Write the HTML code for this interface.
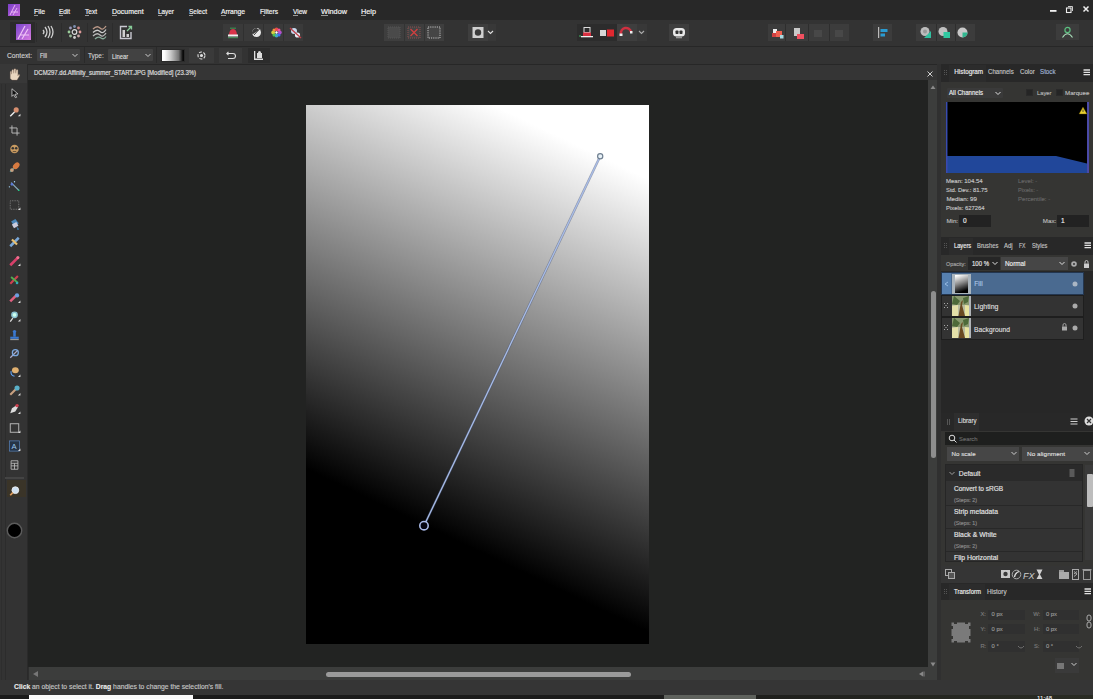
<!DOCTYPE html>
<html><head><meta charset="utf-8">
<style>
*{box-sizing:border-box}
html,body{margin:0;padding:0;width:1093px;height:699px;overflow:hidden;background:#2d2d2d;font-family:"Liberation Sans",sans-serif;color:#d8d8d8}
.a{position:absolute}
.t{position:absolute;white-space:nowrap;line-height:1;transform-origin:0 0}
#menubar{left:0;top:0;width:1093px;height:20px;background:#282828}
.m{position:absolute;top:6px;font-size:8.5px;color:#e6e6e6;letter-spacing:-0.2px}
#toolbar{left:0;top:20px;width:1093px;height:26px;background:#333333}
#ctxbar{left:0;top:46px;width:1093px;height:18px;background:#333333;border-top:1px solid #272727}
#tools{left:0;top:64px;width:28px;height:616px;background:#333333}
#doctab{left:28px;top:64px;width:909px;height:16px;background:#353535;border-top:1px solid #272727}
#canvas{left:28px;top:80px;width:900px;height:587px;background:#222322}
#vscroll{left:928px;top:80px;width:9px;height:600px;background:#3c3d3c}
#hscroll{left:29px;top:667px;width:899px;height:13px;background:#3c3d3c}
#status{left:0;top:680px;width:1093px;height:15px;background:#353535}
#bottom{left:0;top:695px;width:1093px;height:4px;background:linear-gradient(90deg,#1b1b1b 0%,#1c1c1b 60%,#2a2c24 100%)}
#panels{left:937px;top:64px;width:156px;height:616px;background:#303030}
.btn{position:absolute;background:#333}
.dd{position:absolute;background:#3a3a3a;border-radius:1px}
</style></head><body>
<div id="menubar" class="a"></div>
<div id="toolbar" class="a"></div>
<div id="ctxbar" class="a"></div>
<div id="tools" class="a"></div>
<div id="doctab" class="a"></div>
<div id="canvas" class="a"></div>
<div id="vscroll" class="a"></div>
<div id="hscroll" class="a"></div>
<div id="status" class="a"></div>
<div id="bottom" class="a"></div>
<div id="panels" class="a"></div>

<!-- MENUBAR -->
<svg class="a" style="left:8px;top:4px" width="12" height="12" viewBox="0 0 12 12">
<defs><linearGradient id="pg1" x1="0" y1="0" x2="1" y2="1"><stop offset="0" stop-color="#7b3fc8"/><stop offset="1" stop-color="#c267d8"/></linearGradient></defs>
<rect width="12" height="12" fill="url(#pg1)"/>
<path d="M2 11 L7 1 M5 11 L9 4 M3 8 L10 8" stroke="#e9b6f2" stroke-width="1" fill="none"/>
</svg>
<svg class="a" style="left:1048px;top:4px" width="45" height="12">
<rect x="2" y="6" width="6.5" height="1.8" fill="#f0f0f0"/>
<rect x="18.5" y="4" width="4.5" height="4.5" fill="none" stroke="#eee" stroke-width="1.1"/>
<path d="M20 2.5 H24.5 V7" fill="none" stroke="#ccc" stroke-width="1"/>
<path d="M35.5 2.5 L40.5 7.5 M40.5 2.5 L35.5 7.5" stroke="#eee" stroke-width="1.5"/>
</svg>

<div class="a" style="left:34px;top:15px;width:4px;height:1px;background:#9a9a9a"></div><div class="a" style="left:59px;top:15px;width:4px;height:1px;background:#9a9a9a"></div><div class="a" style="left:85px;top:15px;width:4px;height:1px;background:#9a9a9a"></div><div class="a" style="left:112px;top:15px;width:5px;height:1px;background:#9a9a9a"></div><div class="a" style="left:158px;top:15px;width:4px;height:1px;background:#9a9a9a"></div><div class="a" style="left:189px;top:15px;width:4px;height:1px;background:#9a9a9a"></div><div class="a" style="left:221px;top:15px;width:5px;height:1px;background:#9a9a9a"></div><div class="a" style="left:263px;top:15px;width:2px;height:1px;background:#9a9a9a"></div><div class="a" style="left:293px;top:15px;width:5px;height:1px;background:#9a9a9a"></div><div class="a" style="left:321px;top:15px;width:7px;height:1px;background:#9a9a9a"></div><div class="a" style="left:361px;top:15px;width:5px;height:1px;background:#9a9a9a"></div>
<!-- TOOLBAR -->
<div class="a" style="left:10px;top:22px;width:25px;height:21px;background:#2a2a2a"></div>
<div class="a" style="left:36px;top:23px;width:1px;height:19px;background:#2c2c2c"></div>
<div class="a" style="left:61px;top:23px;width:1px;height:19px;background:#2c2c2c"></div>
<div class="a" style="left:87px;top:23px;width:1px;height:19px;background:#2c2c2c"></div>
<div class="a" style="left:112px;top:23px;width:1px;height:19px;background:#2c2c2c"></div>
<svg class="a" style="left:16px;top:24px" width="15" height="16" viewBox="0 0 15 16">
<defs><linearGradient id="pg2" x1="0" y1="0" x2="1" y2="1"><stop offset="0" stop-color="#7a45cc"/><stop offset="1" stop-color="#d77be0"/></linearGradient></defs>
<rect width="15" height="16" fill="url(#pg2)"/>
<path d="M2 15 L9 2 M6 15 L12 5 M4 11 L13 11" stroke="#f0c4f6" stroke-width="1.2" fill="none"/>
</svg>
<svg class="a" style="left:41px;top:24px" width="15" height="16" viewBox="0 0 15 16" fill="none" stroke="#cfcfcf" stroke-width="1.3">
<path d="M2 6 Q4 8 2 10"/><path d="M4 3 Q8 8 4 13"/><path d="M7 2 Q11 8 7 14"/><path d="M10 2 Q14 8 10 14"/>
</svg>
<svg class="a" style="left:67px;top:24px" width="15" height="16" viewBox="0 0 15 16">
<circle cx="7.5" cy="8" r="2.3" fill="none" stroke="#ddd" stroke-width="1.2"/>
<circle cx="7.5" cy="2.5" r="1.4" fill="#7e8fb0"/><circle cx="11.5" cy="4" r="1.4" fill="#c88"/><circle cx="13" cy="8" r="1.4" fill="#d99"/>
<circle cx="11.5" cy="12" r="1.4" fill="#caa"/><circle cx="7.5" cy="13.5" r="1.4" fill="#ccc"/><circle cx="3.5" cy="12" r="1.4" fill="#9b9"/>
<circle cx="2" cy="8" r="1.4" fill="#9c9"/><circle cx="3.5" cy="4" r="1.4" fill="#99b"/>
</svg>
<svg class="a" style="left:92px;top:24px" width="15" height="16" viewBox="0 0 15 16" fill="none" stroke-width="1.3">
<path d="M1 5 Q5 1 8 4 T14 2" stroke="#b98"/><path d="M1 8.5 Q5 4.5 8 7.5 T14 5.5" stroke="#ccc"/><path d="M1 12 Q5 8 8 11 T14 9" stroke="#bbb"/><path d="M3 15 Q6 12 9 14 T14 12.5" stroke="#8a9"/>
</svg>
<svg class="a" style="left:118px;top:24px" width="15" height="16" viewBox="0 0 15 16">
<path d="M9 2.5 H2.5 V14.5 H13 V8" fill="none" stroke="#c8c8d0" stroke-width="1.4"/>
<rect x="4.5" y="6" width="2.5" height="7" fill="#d0d0d0"/><rect x="8.5" y="10" width="2.5" height="3" fill="#d0d0d0"/>
<path d="M9 7 L13.5 2.5 M10.5 2.5 H13.5 V5.5" fill="none" stroke="#8c9" stroke-width="1.3"/>
</svg>

<!-- group A -->
<div class="btn" style="left:223px;top:24px;width:80px;height:17px;background:#3a3a3a"></div>
<div class="a" style="left:243px;top:24px;width:1px;height:17px;background:#303030"></div>
<div class="a" style="left:263px;top:24px;width:1px;height:17px;background:#303030"></div>
<div class="a" style="left:283px;top:24px;width:1px;height:17px;background:#303030"></div>
<svg class="a" style="left:223px;top:24px" width="80" height="17">
<path d="M6 12 Q6 5 10 5 Q14 5 14 12 Z" fill="#d9344a"/><rect x="5" y="10.5" width="10" height="2" fill="#f0f0f0"/><rect x="5" y="13" width="10" height="1.2" fill="#4a8a5a"/><rect x="7" y="3.5" width="6" height="1.5" fill="#3a7a4a"/>
<circle cx="33.5" cy="8.5" r="4.5" fill="#e8e8e8"/><path d="M33.5 4 A4.5 4.5 0 0 0 29.5 10.5 L36 6 Z" fill="#3a3a3a"/><path d="M31 11 L36.5 5" stroke="#444" stroke-width="1"/>
<circle cx="53.5" cy="5.5" r="1.9" fill="#e84a4a"/><circle cx="56.8" cy="8.5" r="1.9" fill="#b050d0"/><circle cx="53.5" cy="11.5" r="1.9" fill="#40a8c8"/><circle cx="50.2" cy="8.5" r="1.9" fill="#d8d040"/><circle cx="51" cy="6" r="1.5" fill="#f09040"/><circle cx="51" cy="11" r="1.5" fill="#50c050"/><circle cx="56" cy="11" r="1.5" fill="#4070f0"/><circle cx="56" cy="6" r="1.5" fill="#f050a0"/><circle cx="53.5" cy="8.5" r="1.2" fill="#fff"/>
<circle cx="71" cy="7" r="3" fill="#c8daf0"/><circle cx="74.5" cy="11" r="2.6" fill="#e8eef8"/><path d="M67 4 L78 14" stroke="#c04048" stroke-width="1.3"/>
</svg>

<!-- group B -->
<div class="btn" style="left:384px;top:24px;width:60px;height:17px;background:#3e3e3e"></div>
<div class="a" style="left:404px;top:24px;width:1px;height:17px;background:#333"></div>
<div class="a" style="left:424px;top:24px;width:1px;height:17px;background:#333"></div>
<svg class="a" style="left:384px;top:24px" width="60" height="17">
<rect x="4" y="3" width="12" height="11" fill="#4a4a4a" stroke="#555" stroke-width="1" stroke-dasharray="1 1"/>
<rect x="24" y="3" width="12" height="11" fill="#444" stroke="#8a5050" stroke-width="1" stroke-dasharray="1 1"/><path d="M26.5 5 L33.5 12 M33.5 5 L26.5 12" stroke="#d04040" stroke-width="1.3"/>
<rect x="44" y="3" width="12" height="11" fill="#454545" stroke="#c0c0c0" stroke-width="1" stroke-dasharray="1.2 1"/>
</svg>
<div class="btn" style="left:468px;top:24px;width:20px;height:17px;background:#3e3e3e"></div>
<div class="btn" style="left:488px;top:24px;width:8px;height:17px;background:#383838"></div>
<svg class="a" style="left:468px;top:24px" width="28" height="17">
<rect x="4.5" y="3" width="11" height="11" fill="#d0d0d0"/><circle cx="10" cy="8.5" r="3.2" fill="#3a3a3a"/>
<path d="M20 7 L22.5 9.5 L25 7" fill="none" stroke="#ddd" stroke-width="1.1"/>
</svg>

<!-- group D snapping -->
<div class="btn" style="left:577px;top:24px;width:40px;height:17px;background:#2c2c2c"></div>
<div class="btn" style="left:617px;top:24px;width:20px;height:17px;background:#3e3e3e"></div>
<div class="btn" style="left:637px;top:24px;width:10px;height:17px;background:#383838"></div>
<svg class="a" style="left:577px;top:24px" width="70" height="17">
<rect x="7" y="3.5" width="6" height="5" fill="none" stroke="#ddd" stroke-width="1"/><rect x="6" y="8.5" width="8" height="3.5" fill="#d83040"/><rect x="4" y="12" width="12" height="1.3" fill="#f0f0f0"/><circle cx="3" cy="12" r="1" fill="#3a8a50"/>
<rect x="23" y="6" width="6" height="6" fill="#d8d8d8"/><rect x="30" y="5.5" width="7" height="7" fill="#e02830"/>
<path d="M44 10 A5 5 0 1 1 54 8" fill="none" stroke="#d03040" stroke-width="2.5"/><rect x="42.5" y="9.5" width="3" height="2.5" fill="#eee"/><rect x="53" y="7" width="2.5" height="2.5" fill="#eee"/>
<path d="M62 7 L64.5 9.5 L67 7" fill="none" stroke="#aaa" stroke-width="1.1"/>
</svg>
<div class="btn" style="left:669px;top:24px;width:20px;height:17px;background:#3e3e3e"></div>
<svg class="a" style="left:669px;top:24px" width="20" height="17">
<rect x="4" y="4" width="12" height="8.5" rx="3.5" fill="#e8e8e8"/><rect x="6.5" y="6.5" width="3" height="3.5" rx="0.8" fill="#333"/><rect x="10.5" y="6.5" width="3" height="3.5" rx="0.8" fill="#333"/><rect x="7" y="12.5" width="6" height="1.8" fill="#999"/>
</svg>

<!-- group E -->
<div class="btn" style="left:768px;top:24px;width:81px;height:17px;background:#3c3c3c"></div>
<div class="a" style="left:785px;top:24px;width:1px;height:17px;background:#2e2e2e"></div>
<div class="a" style="left:808px;top:24px;width:1px;height:17px;background:#2e2e2e"></div>
<div class="a" style="left:829px;top:24px;width:1px;height:17px;background:#2e2e2e"></div>
<svg class="a" style="left:768px;top:24px" width="81" height="17">
<rect x="5" y="5" width="4" height="4" fill="#eee"/><rect x="8" y="7" width="6" height="6" fill="#f06050"/><rect x="4" y="9" width="4" height="4" fill="#d04040"/><rect x="12" y="11" width="3.5" height="3.5" fill="#a8d8e0"/>
<rect x="26" y="4" width="6" height="8" fill="#c8c8c8"/><rect x="29" y="10" width="7" height="5" fill="#f05060"/>
<rect x="46" y="6" width="8" height="7" fill="#484848"/><rect x="67" y="6" width="8" height="7" fill="#484848"/>
</svg>
<div class="btn" style="left:873px;top:24px;width:19px;height:17px;background:#3c3c3c"></div>
<svg class="a" style="left:873px;top:24px" width="19" height="17">
<rect x="5" y="3" width="1.2" height="11" fill="#bbb"/><rect x="7.5" y="5" width="7" height="3" fill="#2a9ad0"/><rect x="7.5" y="9.5" width="4.5" height="3" fill="#2a9ad0"/>
</svg>
<div class="btn" style="left:916px;top:24px;width:59px;height:17px;background:#3c3c3c"></div>
<div class="a" style="left:936px;top:24px;width:1px;height:17px;background:#2e2e2e"></div>
<div class="a" style="left:955px;top:24px;width:1px;height:17px;background:#2e2e2e"></div>
<svg class="a" style="left:916px;top:24px" width="59" height="17">
<circle cx="9" cy="7.5" r="4.5" fill="#bdbdbd"/><circle cx="9" cy="7.5" r="2" fill="#999"/><path d="M8 14 L15 14 L15 7 Z" fill="#30c0a0"/>
<circle cx="27" cy="7.5" r="4.5" fill="#c0c0c0"/><rect x="27.5" y="8" width="6.5" height="6" fill="#30c8a0"/>
<circle cx="46.5" cy="8.5" r="5" fill="#c8c8c8"/><path d="M46.5 8.5 L51.5 8.5 A5 5 0 0 1 46.5 13.5 Z" fill="#30b890"/>
</svg>
<div class="btn" style="left:1056px;top:24px;width:23px;height:16px;background:#3c3c3c"></div>
<svg class="a" style="left:1056px;top:24px" width="23" height="16" fill="none" stroke="#8ad0a0" stroke-width="1.2">
<circle cx="11.5" cy="6" r="2.6" stroke="#5cc080"/><path d="M6.5 13.5 Q11.5 6 16.5 13.5" stroke="#a8dcb8"/>
</svg>

<!-- CONTEXT BAR -->
<div class="dd" style="left:37px;top:49px;width:43px;height:12px;background:#424242"></div><div class="a" style="left:84px;top:47px;width:1px;height:16px;background:#2a2a2a"></div>
<svg class="a" style="left:72px;top:53px" width="6" height="5"><path d="M0.5 1 L3 3.5 L5.5 1" fill="none" stroke="#ccc" stroke-width="1"/></svg>
<div class="dd" style="left:108px;top:49px;width:45px;height:12px;background:#424242"></div><div class="a" style="left:156px;top:47px;width:1px;height:16px;background:#2a2a2a"></div>
<svg class="a" style="left:145px;top:53px" width="6" height="5"><path d="M0.5 1 L3 3.5 L5.5 1" fill="none" stroke="#ccc" stroke-width="1"/></svg>
<div class="a" style="left:161px;top:49px;width:24px;height:13px;background:linear-gradient(90deg,#fff 10%,#c8c8c8 40%,#777 75%,#0a0a0a 95%);border:1px solid #2a2a2a"></div>
<div class="btn" style="left:189px;top:48px;width:25px;height:15px;background:#3a3a3a"></div>
<svg class="a" style="left:196px;top:50px" width="11" height="11" fill="none" stroke="#ddd" stroke-width="1.1"><circle cx="5.5" cy="5.5" r="3.5" stroke-dasharray="3 1.5"/><circle cx="5.5" cy="5.5" r="1" fill="#ddd"/></svg>
<div class="btn" style="left:219px;top:48px;width:23px;height:15px;background:#3a3a3a"></div>
<svg class="a" style="left:225px;top:50px" width="11" height="11" fill="none" stroke="#ddd" stroke-width="1.1"><path d="M2 3.5 H8 A2.5 2.5 0 0 1 8 8.5 H3"/><path d="M3.5 1.8 L1.8 3.5 L3.5 5.2"/></svg>
<div class="btn" style="left:248px;top:48px;width:22px;height:15px;background:#2c2c2c"></div>
<svg class="a" style="left:253px;top:50px" width="11" height="11"><rect x="1" y="1" width="1.3" height="9" fill="#ddd"/><rect x="4" y="3" width="5" height="5" fill="#ddd"/><rect x="1" y="8.5" width="9" height="1.5" fill="#ddd"/><circle cx="6.5" cy="2.5" r="1.5" fill="#ddd"/></svg>

<!-- DOC TAB -->
<svg class="a" style="left:926px;top:70px" width="8" height="8"><path d="M1.5 1.5 L6.5 6.5 M6.5 1.5 L1.5 6.5" stroke="#d0d0d0" stroke-width="1"/></svg>
<svg class="a" style="left:929px;top:84px" width="8" height="7"><path d="M4 1.5 L6.5 5 L1.5 5 Z" fill="#8a8a8a"/></svg>
<svg class="a" style="left:929px;top:661px" width="8" height="7"><path d="M4 5.5 L6.5 1.5 L1.5 1.5 Z" fill="#8a8a8a"/></svg>
<svg class="a" style="left:32px;top:670px" width="7" height="8"><path d="M1 4 L6 1 L6 7 Z" fill="#777"/></svg>
<svg class="a" style="left:918px;top:670px" width="7" height="8"><path d="M1 4 L5 1.5 L5 6.5 Z" fill="#888"/><rect x="5.5" y="1.5" width="1" height="5" fill="#888"/></svg>
<div class="a" style="left:326px;top:672px;width:305px;height:5px;border-radius:3px;background:#9a9a9a"></div>

<!-- STATUS -->
<div class="a" style="left:29px;top:695px;width:164px;height:4px;background:#fafafa"></div>
<div class="a" style="left:664px;top:695px;width:92px;height:4px;background:#5f625d"></div><div class="t" style="left:1037px;top:695px;font-size:6px;color:#ddd;font-weight:bold">11:48</div>
<!-- LEFT TOOLS -->
<div class="a" style="left:0;top:64px;width:28px;height:19px;background:#383838"></div>
<div class="a" style="left:5px;top:84px;width:1px;height:596px;background:#2c2c2c"></div><div class="a" style="left:1px;top:84px;width:1px;height:596px;background:#2e2e2e"></div><div class="a" style="left:7px;top:480px;width:19px;height:17px;background:#3a3428"></div><div class="a" style="left:27px;top:64px;width:1px;height:616px;background:#2a2a2a"></div>
<svg class="a" style="left:0;top:64px" width="28" height="614">
<g transform="translate(14.5,11) scale(0.85)"><path d="M-5 4 L-5 -3 Q-5 -5 -3.5 -4 L-3.5 -1 L-3 -6 Q-2 -7 -1 -6 L-1 -2 L-0.5 -7 Q0.5 -8 1.5 -7 L1.5 -2 L2 -6 Q3 -7 4 -6 L4 1 L5 -1 Q6.5 -1 6 1 L3 6 L-3 6 Z" fill="#ead6bf" stroke="#8a7060" stroke-width="0.4"/></g>
<g transform="translate(14.5,29) scale(0.85)"><path d="M-3 -5 L4 1 L0.5 1.5 L2.5 5 L1 5.5 L-1 2 L-3 4 Z" fill="#111" stroke="#ddd" stroke-width="0.9"/></g>
<g transform="translate(14.5,48) scale(0.85)"><circle cx="2" cy="-2.5" r="3" fill="#d89070"/><path d="M0 0 L-5 5" stroke="#eee" stroke-width="1.6"/><path d="M4 5 L7 5 L7 2 Z" fill="#ddd"/></g>
<g transform="translate(14.5,66.5) scale(0.85)" fill="none" stroke="#bbb" stroke-width="1.1"><path d="M-3 -6 V3 H6 M-6 -3 H3 V6"/></g>
<g transform="translate(14.5,85) scale(0.85)"><circle r="5" fill="#c89a60"/><circle cx="-2" cy="-1" r="1.5" fill="#333"/><circle cx="2" cy="-1" r="1.5" fill="#333"/><path d="M-2 3 L2 3" stroke="#543" stroke-width="1"/></g>
<g transform="translate(14.5,103.5) scale(0.85)"><path d="M-5 5 L0 0" stroke="#3a9aa0" stroke-width="2"/><ellipse cx="2" cy="-2" rx="3.2" ry="4.5" transform="rotate(45 2 -2)" fill="#d77a40"/><circle cx="-3" cy="3" r="2.2" fill="#c8a080"/></g>
<g transform="translate(14.5,122) scale(0.85)"><path d="M-4 -4 L5 5" stroke="#8ab" stroke-width="1.3"/><path d="M-5 -2 L-3 -4 L-1 -2 L-3 0 Z" fill="#5a7ad8"/><circle cx="0" cy="-5" r="0.8" fill="#adf"/><circle cx="-6" cy="1" r="0.8" fill="#adf"/><circle cx="5" cy="5" r="1" fill="#2c8"/></g>
<g transform="translate(14.5,141) scale(0.85)"><rect x="-5" y="-5" width="10" height="10" fill="none" stroke="#888" stroke-width="1" stroke-dasharray="1 1"/><path d="M4 6 L7 6 L7 3 Z" fill="#ddd"/></g>
<g transform="translate(14.5,160) scale(0.85)"><path d="M-4 -3 L1 -6 L5 -1 L0 3 Z" fill="#4a86b8"/><rect x="-3" y="-1" width="6" height="5" fill="#ccd" transform="rotate(-30)"/><path d="M3 4 Q5 6 4 7" stroke="#4af" fill="none"/></g>
<g transform="translate(14.5,178) scale(0.85)"><path d="M-5 5 L5 -5" stroke="#7aa8d8" stroke-width="3"/><path d="M-3 -3 L3 3" stroke="#e8c070" stroke-width="2.5"/></g>
<g transform="translate(14.5,197) scale(0.85)"><path d="M-5 5 L4 -4" stroke="#d8406a" stroke-width="3.2"/><circle cx="4" cy="-4" r="1.8" fill="#f07090"/><path d="M4 6 L7 6 L7 3 Z" fill="#ddd"/></g>
<g transform="translate(14.5,215.5) scale(0.85)"><path d="M-5 5 L4 -4" stroke="#d04050" stroke-width="2.5"/><path d="M-4 -3 L4 4" stroke="#50b050" stroke-width="2.2"/><circle cx="3" cy="4" r="1.5" fill="#3ab"/></g>
<g transform="translate(14.5,234) scale(0.85)"><path d="M-5 4 L3 -4" stroke="#e06080" stroke-width="3"/><circle cx="3" cy="-3" r="2.5" fill="#6a9ee0"/><path d="M4 6 L7 6 L7 3 Z" fill="#ddd"/></g>
<g transform="translate(14.5,252.5) scale(0.85)"><circle cx="0" cy="-2" r="4" fill="#8ac0d0"/><circle cx="0" cy="-2" r="2.2" fill="#cfe"/><path d="M-2 2 L-5 6" stroke="#ddd" stroke-width="1.5"/><path d="M4 6 L7 6 L7 3 Z" fill="#ddd"/></g>
<g transform="translate(14.5,271) scale(0.85)"><circle cx="0" cy="-4" r="2" fill="#3a78d0"/><rect x="-1.5" y="-3" width="3" height="5" fill="#3a78d0"/><rect x="-5" y="2" width="10" height="2.5" fill="#3a78d0"/><rect x="-5" y="5" width="10" height="1" fill="#bbb"/></g>
<g transform="translate(14.5,289.5) scale(0.85)"><path d="M-5 5 L4 -4" stroke="#aac" stroke-width="1.5"/><circle cx="1" cy="-1" r="3.5" fill="none" stroke="#7aa8e0" stroke-width="1.5"/></g>
<g transform="translate(14.5,308) scale(0.85)"><ellipse cx="1" cy="-2" rx="4" ry="3.5" fill="#e0b070"/><path d="M-4 -1 Q-5 4 0 5" stroke="#6af" fill="none" stroke-width="1.2"/><path d="M4 6 L7 6 L7 3 Z" fill="#ddd"/></g>
<g transform="translate(14.5,326.5) scale(0.85)"><path d="M-5 5 L3 -3" stroke="#c8a080" stroke-width="2.5"/><circle cx="3" cy="-3" r="3" fill="#5ab0c8"/><path d="M4 6 L7 6 L7 3 Z" fill="#ddd"/></g>
<g transform="translate(14.5,345) scale(0.85)"><path d="M-5 5 L-3 -1 L2 -4 L4 -2 L1 3 Z" fill="#ddd"/><circle cx="3" cy="-4" r="2" fill="#d04050"/><path d="M4 6 L7 6 L7 3 Z" fill="#ddd"/></g>
<g transform="translate(14.5,364) scale(0.85)"><rect x="-5" y="-5" width="10" height="10" fill="none" stroke="#bbb" stroke-width="1.1"/><path d="M4 6 L7 6 L7 3 Z" fill="#ddd"/></g>
<g transform="translate(14.5,382) scale(0.85)"><rect x="-6" y="-6" width="12" height="12" fill="#263446" stroke="#5a86c0" stroke-width="0.8"/><text x="-3.5" y="4" font-size="9" fill="#9cc8f0" font-family="Liberation Sans">A</text><path d="M4 6 L7 6 L7 3 Z" fill="#ddd"/></g>
<g transform="translate(14.5,401) scale(0.85)" fill="none" stroke="#bbb" stroke-width="1"><path d="M-4 -5 H4 V5 H-4 Z M-4 -2 H4 M-4 1 H4 M0 -2 V5"/></g>
<rect x="5" y="413" width="19" height="2" fill="#444"/>
<g transform="translate(14.5,427) scale(0.85)"><circle cx="1" cy="-1" r="4" fill="#cfe0f0" stroke="#eee" stroke-width="1"/><path d="M-2 2 L-5 5" stroke="#e0a060" stroke-width="2"/></g>
<circle cx="14.5" cy="466.5" r="7.2" fill="#000" stroke="#5c5c5c" stroke-width="1.4"/>
</svg>
<!-- RIGHT PANELS -->
<div class="a" style="left:937px;top:64px;width:156px;height:616px;background:#303030"></div>
<!-- histogram -->
<div class="a" style="left:941px;top:64px;width:152px;height:18px;background:#282828"></div>
<div class="a" style="left:949px;top:65px;width:37px;height:17px;background:#2c2c2c"></div>
<div class="a" style="left:941px;top:82px;width:152px;height:155px;background:#353533"></div>
<svg class="a" style="left:943px;top:69px" width="5" height="8"><path d="M1 1h1v1h-1zM3 1h1v1h-1zM1 3h1v1h-1zM3 3h1v1h-1zM1 5h1v1h-1zM3 5h1v1h-1z" fill="#555"/></svg>
<svg class="a" style="left:1083px;top:69px" width="8" height="8"><path d="M0.5 1h6.5M0.5 3.3h6.5M0.5 5.6h6.5" stroke="#e0e0e0" stroke-width="1.3"/></svg>

<div class="dd" style="left:947px;top:88px;width:56px;height:10px;background:#3a3a3a"></div>
<svg class="a" style="left:995px;top:91px" width="6" height="5"><path d="M0.5 1 L3 3.5 L5.5 1" fill="none" stroke="#ddd" stroke-width="1"/></svg>
<div class="a" style="left:1026px;top:89px;width:7px;height:7px;background:#252525;border:1px solid #2a2a2a"></div>
<div class="a" style="left:1056px;top:89px;width:7px;height:7px;background:#252525;border:1px solid #2a2a2a"></div>

<svg class="a" style="left:946px;top:102px" width="143" height="71">
<rect width="143" height="71" fill="#21479a"/><rect x="141" width="2" height="71" fill="#4a4aa8"/><rect width="1.5" height="71" fill="#3a4ab0"/>
<path d="M1.5 0 H141 V61.5 L110 54 L1.5 54 Z" fill="#000"/>
<path d="M137 5 L141 12 L133 12 Z" fill="#e8d030" stroke="#5a4a00" stroke-width="0.4"/><rect x="136.6" y="7.5" width="0.8" height="2.5" fill="#333"/>
</svg>
<div class="a" style="left:959px;top:215px;width:32px;height:12px;background:#222"></div>
<div class="a" style="left:1057px;top:215px;width:32px;height:12px;background:#222"></div>

<!-- layers -->
<div class="a" style="left:941px;top:237px;width:152px;height:18px;background:#282828"></div>
<div class="a" style="left:949px;top:238px;width:24px;height:17px;background:#2c2c2c"></div>
<div class="a" style="left:941px;top:255px;width:152px;height:158px;background:#353533"></div>
<svg class="a" style="left:943px;top:242px" width="5" height="8"><path d="M1 1h1v1h-1zM3 1h1v1h-1zM1 3h1v1h-1zM3 3h1v1h-1zM1 5h1v1h-1zM3 5h1v1h-1z" fill="#555"/></svg>
<svg class="a" style="left:1084px;top:242px" width="8" height="8"><path d="M0.5 1h6.5M0.5 3.3h6.5M0.5 5.6h6.5" stroke="#e0e0e0" stroke-width="1.3"/></svg>

<div class="a" style="left:968px;top:257px;width:32px;height:13px;background:#262626"></div>
<svg class="a" style="left:992px;top:261px" width="6" height="5"><path d="M0.5 1 L3 3.5 L5.5 1" fill="none" stroke="#ddd" stroke-width="1"/></svg>
<div class="a" style="left:1001px;top:257px;width:67px;height:13px;background:#464646"></div>
<svg class="a" style="left:1059px;top:261px" width="6" height="5"><path d="M0.5 1 L3 3.5 L5.5 1" fill="none" stroke="#ddd" stroke-width="1"/></svg>
<svg class="a" style="left:1070px;top:259px" width="22" height="10"><circle cx="4" cy="5" r="2.8" fill="#aaa"/><circle cx="4" cy="5" r="1" fill="#333"/><rect x="14" y="4.5" width="5" height="4.5" fill="#ccc"/><path d="M15 4.5 V3 A1.5 1.5 0 0 1 18 3 V4.5" fill="none" stroke="#ccc" stroke-width="0.9"/></svg>

<div class="a" style="left:941px;top:271px;width:152px;height:142px;background:#272727"></div>
<div class="a" style="left:941px;top:272px;width:143px;height:23px;background:#4a6a90;border:1px solid #233650"></div>
<div class="a" style="left:942px;top:273px;width:9px;height:21px;background:#5680b0"></div>
<div class="a" style="left:941px;top:295px;width:143px;height:22px;background:#333333;border:1px solid #1e1e1e"></div>
<div class="a" style="left:941px;top:317px;width:143px;height:23px;background:#333333;border:1px solid #1e1e1e"></div>
<div class="a" style="left:952px;top:274px;width:19px;height:20px;background:#aab4bc"></div>
<div class="a" style="left:955px;top:275px;width:13px;height:18px;background:linear-gradient(160deg,#fff 5%,#888 45%,#000 85%)"></div>
<svg class="a" style="left:952px;top:296px" width="19" height="20"><rect width="19" height="20" fill="#b8bca0"/><rect x="0" y="0" width="19" height="9" fill="#8a9a70"/><path d="M2 0 L8 5 L5 9 L0 8 Z M11 2 L17 0 L16 6 L12 8 Z" fill="#4e6a3a"/><path d="M0 10 L6 9 L6 20 L0 20 Z" fill="#e4e0a8"/><path d="M13 9 L19 10 L19 20 L13 20 Z" fill="#e8e4a0"/><path d="M6.5 20 L9 6 L11 4 L10 9 L13 20 Z" fill="#6a4a22"/><rect x="17" y="0" width="2" height="20" fill="#b0b4b8"/></svg>
<svg class="a" style="left:952px;top:318px" width="19" height="20"><rect width="19" height="20" fill="#b8bca0"/><rect x="0" y="0" width="19" height="9" fill="#8a9a70"/><path d="M2 0 L8 5 L5 9 L0 8 Z M11 2 L17 0 L16 6 L12 8 Z" fill="#4e6a3a"/><path d="M0 10 L6 9 L6 20 L0 20 Z" fill="#e4e0a8"/><path d="M13 9 L19 10 L19 20 L13 20 Z" fill="#e8e4a0"/><path d="M6.5 20 L9 6 L11 4 L10 9 L13 20 Z" fill="#6a4a22"/><rect x="17" y="0" width="2" height="20" fill="#b0b4b8"/></svg>
<svg class="a" style="left:943px;top:280px" width="7" height="50"><path d="M5 2 L2 4 L5 6" fill="none" stroke="#9cc0e8" stroke-width="0.9"/>
<path d="M1 23h1v1h-1zM4 23h1v1h-1zM2.5 25h1v1h-1zM1 27h1v1h-1zM4 27h1v1h-1z" fill="#aaa"/>
<path d="M1 45h1v1h-1zM4 45h1v1h-1zM2.5 47h1v1h-1zM1 49h1v1h-1zM4 49h1v1h-1z" fill="#aaa"/></svg>
<svg class="a" style="left:1060px;top:278px" width="20" height="56"><circle cx="15" cy="6" r="2.5" fill="#aab6c4"/><circle cx="15" cy="28" r="2.5" fill="#aaa"/><circle cx="15" cy="50" r="2.5" fill="#aaa"/><rect x="2" y="48.5" width="5" height="4" fill="#aaa"/><path d="M3 48.5 V47 A1.5 1.5 0 0 1 6 47 V48.5" fill="none" stroke="#aaa" stroke-width="0.9"/></svg>
<div class="a" style="left:930.5px;top:291px;width:5px;height:167px;background:#8e8e8e;border-radius:2.5px"></div>

<!-- library -->
<div class="a" style="left:941px;top:413px;width:152px;height:153px;background:#353533"></div>
<div class="a" style="left:941px;top:413px;width:152px;height:18px;background:#282828"></div>
<div class="a" style="left:954px;top:413px;width:25px;height:18px;background:#2e2e2e"></div>
<svg class="a" style="left:946px;top:418px" width="5" height="8"><path d="M1 1h1v6h-1zM3 1h1v6h-1z" fill="#555"/></svg>
<svg class="a" style="left:1070px;top:418px" width="8" height="8"><path d="M0.5 1h7M0.5 3.5h7M0.5 6h7" stroke="#d0d0d0" stroke-width="1"/></svg>
<svg class="a" style="left:1084px;top:416px" width="9" height="10"><circle cx="5" cy="5" r="4.5" fill="#ddd"/><path d="M3 3 L7 7 M7 3 L3 7" stroke="#333" stroke-width="1.2"/></svg>
<div class="a" style="left:945px;top:432px;width:148px;height:13px;background:#1e1f1e"></div>
<svg class="a" style="left:948px;top:434px" width="9" height="9" fill="none" stroke="#ddd" stroke-width="1"><circle cx="4" cy="4" r="2.8"/><path d="M6 6 L8.5 8.5"/></svg>
<div class="a" style="left:947px;top:447px;width:72px;height:14px;background:#464646"></div>
<svg class="a" style="left:1011px;top:451px" width="6" height="5"><path d="M0.5 1 L3 3.5 L5.5 1" fill="none" stroke="#ccc" stroke-width="1"/></svg>
<div class="a" style="left:1022px;top:447px;width:71px;height:14px;background:#464646"></div>
<svg class="a" style="left:1084px;top:451px" width="6" height="5"><path d="M0.5 1 L3 3.5 L5.5 1" fill="none" stroke="#ccc" stroke-width="1"/></svg>
<div class="a" style="left:945px;top:464px;width:138px;height:98px;background:#333333;border:1px solid #262626"></div>
<div class="a" style="left:1085px;top:465px;width:8px;height:95px;background:#3a3a3a"></div>
<div class="a" style="left:1087px;top:474px;width:6px;height:33px;background:#bdbdbd;border-radius:1px"></div>
<div class="a" style="left:946px;top:465px;width:136px;height:16px;background:#2a2a2a"></div>
<svg class="a" style="left:949px;top:471px" width="6" height="5"><path d="M0.5 1 L3 3.5 L5.5 1" fill="none" stroke="#aaa" stroke-width="0.9"/></svg>
<svg class="a" style="left:1069px;top:469px" width="6" height="8"><path d="M0.5 1h5M0.5 3h5M0.5 5h5M0.5 7h5" stroke="#8a8a8a" stroke-width="1"/></svg>
<div class="a" style="left:946px;top:505px;width:136px;height:1px;background:#282828"></div>
<div class="a" style="left:946px;top:528px;width:136px;height:1px;background:#282828"></div>
<div class="a" style="left:946px;top:551px;width:136px;height:1px;background:#282828"></div>

<!-- layers bottom toolbar -->
<div class="a" style="left:941px;top:566px;width:152px;height:17px;background:#353535"></div>
<svg class="a" style="left:941px;top:567px" width="152" height="15" fill="none" stroke="#bbb" stroke-width="1">
<rect x="4.5" y="2.5" width="6" height="6" stroke="#aaa"/><rect x="7.5" y="5.5" width="6" height="6" fill="#555" stroke="#aaa"/>
<rect x="60" y="3" width="9" height="8" fill="#c8c8c8" stroke="none"/><circle cx="64.5" cy="7" r="2.2" fill="#3a3a3a" stroke="none"/>
<circle cx="75.5" cy="7.5" r="4.3" stroke="#aaa"/><path d="M73.5 10 Q74 6 78 4.5" stroke="#ddd" stroke-width="1.3"/>
<text x="82" y="11.5" font-size="9" fill="#cfcfcf" stroke="none" font-family="Liberation Sans" font-style="italic">FX</text>
<path d="M95.5 2.5 H101.5 L99 7.5 L101.5 12 H95.5 L98 7.5 Z" fill="#d0d0d0" stroke="none"/>
<rect x="118" y="3" width="5" height="3" fill="#999" stroke="none"/><rect x="118" y="5" width="10" height="7" fill="#aaa" stroke="none"/>
<rect x="131.5" y="2.5" width="6" height="10" stroke="#aaa"/><path d="M133 4.5 L136 7 L133 9.5 M136 4.5 L133 7" stroke="#aaa"/>
<rect x="142.5" y="3.5" width="7" height="9" stroke="#999"/><rect x="141.5" y="2" width="9" height="1.3" fill="#999" stroke="none"/>
</svg>
<!-- transform -->
<div class="a" style="left:941px;top:583px;width:152px;height:17px;background:#282828"></div>
<div class="a" style="left:949px;top:584px;width:36px;height:16px;background:#2c2c2c"></div>
<svg class="a" style="left:943px;top:588px" width="5" height="8"><path d="M1 1h1v1h-1zM3 1h1v1h-1zM1 3h1v1h-1zM3 3h1v1h-1zM1 5h1v1h-1zM3 5h1v1h-1z" fill="#555"/></svg>
<svg class="a" style="left:1084px;top:588px" width="8" height="8"><path d="M0.5 1h6.5M0.5 3.3h6.5M0.5 5.6h6.5" stroke="#e0e0e0" stroke-width="1.3"/></svg>
<div class="a" style="left:941px;top:600px;width:152px;height:80px;background:#353533"></div>
<svg class="a" style="left:949px;top:620px" width="24" height="25"><rect x="2.5" y="2.5" width="19" height="20" fill="#7a7a7a"/><g fill="#353533"><rect x="5" y="1" width="3" height="3"/><rect x="16" y="1" width="3" height="3"/><rect x="5" y="21" width="3" height="3"/><rect x="16" y="21" width="3" height="3"/><rect x="1" y="6" width="3" height="3"/><rect x="1" y="16" width="3" height="3"/><rect x="20" y="6" width="3" height="3"/><rect x="20" y="16" width="3" height="3"/></g></svg>
<div class="a" style="left:988px;top:610px;width:37px;height:10px;background:#303030"></div>
<div class="a" style="left:988px;top:624px;width:37px;height:10px;background:#303030"></div>
<div class="a" style="left:988px;top:641px;width:37px;height:11px;background:#303030"></div>
<div class="a" style="left:1043px;top:610px;width:36px;height:10px;background:#303030"></div>
<div class="a" style="left:1043px;top:624px;width:36px;height:10px;background:#303030"></div>
<div class="a" style="left:1043px;top:641px;width:36px;height:11px;background:#303030"></div>
<svg class="a" style="left:1017px;top:643px" width="70" height="8" fill="none" stroke="#777" stroke-width="0.9"><path d="M1 3 Q4 7 7 3"/><path d="M59 3 Q62 7 65 3"/></svg>
<svg class="a" style="left:1086px;top:614px" width="7" height="15" fill="none" stroke="#aaa" stroke-width="1"><rect x="1" y="1" width="4" height="6" rx="2"/><rect x="1" y="8" width="4" height="6" rx="2"/></svg>
<div class="a" style="left:1055px;top:658px;width:24px;height:15px;background:#3a3a3a"></div>
<div class="a" style="left:1057px;top:663px;width:7px;height:6px;background:#777"></div>
<svg class="a" style="left:1071px;top:662px" width="6" height="5"><path d="M0.5 1 L3 3.5 L5.5 1" fill="none" stroke="#ccc" stroke-width="1"/></svg>


<div class="t" style="left:34.0px;top:7.53px;font-size:8px;color:#f2f2f2;transform:scaleX(0.853);-webkit-text-stroke:0.2px #f2f2f2;">File</div>
<div class="t" style="left:59.0px;top:7.53px;font-size:8px;color:#f2f2f2;transform:scaleX(0.797);-webkit-text-stroke:0.2px #f2f2f2;">Edit</div>
<div class="t" style="left:85.0px;top:7.53px;font-size:8px;color:#f2f2f2;transform:scaleX(0.818);-webkit-text-stroke:0.2px #f2f2f2;">Text</div>
<div class="t" style="left:112.2px;top:7.53px;font-size:8px;color:#f2f2f2;transform:scaleX(0.866);-webkit-text-stroke:0.2px #f2f2f2;">Document</div>
<div class="t" style="left:158.0px;top:7.53px;font-size:8px;color:#f2f2f2;transform:scaleX(0.799);-webkit-text-stroke:0.2px #f2f2f2;">Layer</div>
<div class="t" style="left:189.0px;top:7.53px;font-size:8px;color:#f2f2f2;transform:scaleX(0.810);-webkit-text-stroke:0.2px #f2f2f2;">Select</div>
<div class="t" style="left:221.0px;top:7.53px;font-size:8px;color:#f2f2f2;transform:scaleX(0.843);-webkit-text-stroke:0.2px #f2f2f2;">Arrange</div>
<div class="t" style="left:260.0px;top:7.53px;font-size:8px;color:#f2f2f2;transform:scaleX(0.826);-webkit-text-stroke:0.2px #f2f2f2;">Filters</div>
<div class="t" style="left:293.0px;top:7.53px;font-size:8px;color:#f2f2f2;transform:scaleX(0.814);-webkit-text-stroke:0.2px #f2f2f2;">View</div>
<div class="t" style="left:321.0px;top:7.53px;font-size:8px;color:#f2f2f2;transform:scaleX(0.914);-webkit-text-stroke:0.2px #f2f2f2;">Window</div>
<div class="t" style="left:361.0px;top:7.53px;font-size:8px;color:#f2f2f2;transform:scaleX(0.912);-webkit-text-stroke:0.2px #f2f2f2;">Help</div>
<div class="t" style="left:7.0px;top:52.15px;font-size:7.5px;color:#cfcfcf;transform:scaleX(0.895);-webkit-text-stroke:0.15px #cfcfcf;">Context:</div>
<div class="t" style="left:39.5px;top:52.50px;font-size:6.5px;color:#dddddd;transform:scaleX(0.842);-webkit-text-stroke:0.15px #dddddd;">Fill</div>
<div class="t" style="left:88.4px;top:51.75px;font-size:7.5px;color:#cfcfcf;transform:scaleX(0.856);-webkit-text-stroke:0.15px #cfcfcf;">Type:</div>
<div class="t" style="left:111.8px;top:53.50px;font-size:6.5px;color:#dddddd;transform:scaleX(0.891);-webkit-text-stroke:0.15px #dddddd;">Linear</div>
<div class="t" style="left:34.0px;top:70.11px;font-size:6.6px;color:#e0e0e0;transform:scaleX(0.910);-webkit-text-stroke:0.15px #e0e0e0;">DCM297.dd.Affinity_summer_START.JPG [Modified] (23.3%)</div>
<div class="t" style="left:14.4px;top:684.41px;font-size:6.6px;color:#c4c4c4;transform:scaleX(1.028);-webkit-text-stroke:0.15px #c4c4c4;"><b style='color:#f4f4f4'>Click</b> an object to select it. <b style='color:#f4f4f4'>Drag</b> handles to change the selection's fill.</div>
<div class="t" style="left:954.3px;top:69.47px;font-size:6.3px;color:#eeeeee;-webkit-text-stroke:0.15px #eeeeee;">Histogram</div>
<div class="t" style="left:988.3px;top:69.47px;font-size:6.3px;color:#c2c2c2;transform:scaleX(0.966);-webkit-text-stroke:0.15px #c2c2c2;">Channels</div>
<div class="t" style="left:1019.6px;top:69.47px;font-size:6.3px;color:#c2c2c2;transform:scaleX(0.976);-webkit-text-stroke:0.15px #c2c2c2;">Color</div>
<div class="t" style="left:1040.0px;top:69.47px;font-size:6.3px;color:#a0b4d4;transform:scaleX(0.984);-webkit-text-stroke:0.15px #a0b4d4;">Stock</div>
<div class="t" style="left:949.0px;top:89.80px;font-size:6.5px;color:#eeeeee;transform:scaleX(0.932);-webkit-text-stroke:0.15px #eeeeee;">All Channels</div>
<div class="t" style="left:1036.6px;top:89.92px;font-size:6px;color:#b4b4b4;transform:scaleX(0.959);-webkit-text-stroke:0.15px #b4b4b4;">Layer</div>
<div class="t" style="left:1065.0px;top:89.92px;font-size:6px;color:#bcbcbc;transform:scaleX(1.030);-webkit-text-stroke:0.15px #bcbcbc;">Marquee</div>
<div class="t" style="left:946.4px;top:177.95px;font-size:6.2px;color:#c6c6c6;transform:scaleX(0.967);-webkit-text-stroke:0.15px #c6c6c6;">Mean: 104.54</div>
<div class="t" style="left:946.4px;top:186.95px;font-size:6.2px;color:#c6c6c6;transform:scaleX(0.947);-webkit-text-stroke:0.15px #c6c6c6;">Std. Dev.: 81.75</div>
<div class="t" style="left:946.4px;top:195.95px;font-size:6.2px;color:#c6c6c6;-webkit-text-stroke:0.15px #c6c6c6;">Median: 99</div>
<div class="t" style="left:946.4px;top:204.95px;font-size:6.2px;color:#c6c6c6;transform:scaleX(0.951);-webkit-text-stroke:0.15px #c6c6c6;">Pixels: 627264</div>
<div class="t" style="left:1017.8px;top:177.95px;font-size:6.2px;color:#666666;transform:scaleX(0.946);-webkit-text-stroke:0.15px #666666;">Level: -</div>
<div class="t" style="left:1017.8px;top:186.95px;font-size:6.2px;color:#666666;transform:scaleX(0.918);-webkit-text-stroke:0.15px #666666;">Pixels: -</div>
<div class="t" style="left:1017.8px;top:195.95px;font-size:6.2px;color:#666666;transform:scaleX(0.975);-webkit-text-stroke:0.15px #666666;">Percentile: -</div>
<div class="t" style="left:946.4px;top:218.05px;font-size:6.2px;color:#bbbbbb;-webkit-text-stroke:0.15px #bbbbbb;">Min:</div>
<div class="t" style="left:963.0px;top:217.80px;font-size:6.5px;color:#eeeeee;-webkit-text-stroke:0.15px #eeeeee;">0</div>
<div class="t" style="left:1042.8px;top:218.05px;font-size:6.2px;color:#bbbbbb;-webkit-text-stroke:0.15px #bbbbbb;">Max:</div>
<div class="t" style="left:1061.0px;top:217.80px;font-size:6.5px;color:#eeeeee;-webkit-text-stroke:0.15px #eeeeee;">1</div>
<div class="t" style="left:953.8px;top:242.77px;font-size:6.3px;color:#eeeeee;transform:scaleX(0.910);-webkit-text-stroke:0.15px #eeeeee;">Layers</div>
<div class="t" style="left:976.8px;top:242.77px;font-size:6.3px;color:#c2c2c2;transform:scaleX(0.926);-webkit-text-stroke:0.15px #c2c2c2;">Brushes</div>
<div class="t" style="left:1004.4px;top:242.77px;font-size:6.3px;color:#c2c2c2;transform:scaleX(0.944);-webkit-text-stroke:0.15px #c2c2c2;">Adj</div>
<div class="t" style="left:1019.2px;top:242.77px;font-size:6.3px;color:#c2c2c2;transform:scaleX(0.808);-webkit-text-stroke:0.15px #c2c2c2;">FX</div>
<div class="t" style="left:1031.6px;top:242.77px;font-size:6.3px;color:#c2c2c2;transform:scaleX(0.898);-webkit-text-stroke:0.15px #c2c2c2;">Styles</div>
<div class="t" style="left:945.6px;top:262.09px;font-size:5.8px;color:#a8a8a8;transform:scaleX(0.926);-webkit-text-stroke:0.15px #a8a8a8;">Opacity:</div>
<div class="t" style="left:971.9px;top:261.00px;font-size:6.5px;color:#e8e8e8;transform:scaleX(0.927);-webkit-text-stroke:0.15px #e8e8e8;">100 %</div>
<div class="t" style="left:1004.8px;top:261.00px;font-size:6.5px;color:#eeeeee;transform:scaleX(0.978);-webkit-text-stroke:0.15px #eeeeee;">Normal</div>
<div class="t" style="left:974.3px;top:281.20px;font-size:6.5px;color:#a9c2e2;-webkit-text-stroke:0.15px #a9c2e2;">Fill</div>
<div class="t" style="left:974.3px;top:304.30px;font-size:6.5px;color:#dddddd;transform:scaleX(1.071);-webkit-text-stroke:0.15px #dddddd;">Lighting</div>
<div class="t" style="left:974.3px;top:326.50px;font-size:6.5px;color:#dddddd;transform:scaleX(1.034);-webkit-text-stroke:0.15px #dddddd;">Background</div>
<div class="t" style="left:958.0px;top:417.50px;font-size:6.5px;color:#dddddd;transform:scaleX(0.931);-webkit-text-stroke:0.15px #dddddd;">Library</div>
<div class="t" style="left:958.8px;top:436.42px;font-size:6px;color:#6a6a6a;transform:scaleX(0.973);-webkit-text-stroke:0.15px #6a6a6a;">Search</div>
<div class="t" style="left:951.5px;top:451.35px;font-size:6.2px;color:#dddddd;-webkit-text-stroke:0.15px #dddddd;">No scale</div>
<div class="t" style="left:1026.8px;top:451.35px;font-size:6.2px;color:#dddddd;transform:scaleX(1.047);-webkit-text-stroke:0.15px #dddddd;">No alignment</div>
<div class="t" style="left:958.8px;top:471.44px;font-size:6.8px;color:#e2e2e2;-webkit-text-stroke:0.15px #e2e2e2;">Default</div>
<div class="t" style="left:954.0px;top:485.50px;font-size:6.5px;color:#e4e4e4;-webkit-text-stroke:0.15px #e4e4e4;">Convert to sRGB</div>
<div class="t" style="left:954.0px;top:497.77px;font-size:5px;color:#8a8a8a;transform:scaleX(1.061);-webkit-text-stroke:0.15px #8a8a8a;">(Steps: 2)</div>
<div class="t" style="left:954.0px;top:508.50px;font-size:6.5px;color:#e4e4e4;transform:scaleX(1.041);-webkit-text-stroke:0.15px #e4e4e4;">Strip metadata</div>
<div class="t" style="left:954.0px;top:520.77px;font-size:5px;color:#8a8a8a;transform:scaleX(1.061);-webkit-text-stroke:0.15px #8a8a8a;">(Steps: 1)</div>
<div class="t" style="left:954.0px;top:532.30px;font-size:6.5px;color:#e4e4e4;transform:scaleX(1.055);-webkit-text-stroke:0.15px #e4e4e4;">Black &amp; White</div>
<div class="t" style="left:954.0px;top:544.37px;font-size:5px;color:#8a8a8a;transform:scaleX(1.061);-webkit-text-stroke:0.15px #8a8a8a;">(Steps: 2)</div>
<div class="t" style="left:954.0px;top:555.30px;font-size:6.5px;color:#e4e4e4;transform:scaleX(1.059);-webkit-text-stroke:0.15px #e4e4e4;">Flip Horizontal</div>
<div class="t" style="left:954.0px;top:589.37px;font-size:6.3px;color:#eeeeee;transform:scaleX(0.948);-webkit-text-stroke:0.15px #eeeeee;">Transform</div>
<div class="t" style="left:987.0px;top:589.37px;font-size:6.3px;color:#c2c2c2;-webkit-text-stroke:0.15px #c2c2c2;">History</div>
<div class="t" style="left:980.4px;top:612.39px;font-size:5.8px;color:#7a7a7a;-webkit-text-stroke:0.15px #7a7a7a;">X:</div>
<div class="t" style="left:980.4px;top:626.59px;font-size:5.8px;color:#7a7a7a;-webkit-text-stroke:0.15px #7a7a7a;">Y:</div>
<div class="t" style="left:980.4px;top:644.39px;font-size:5.8px;color:#7a7a7a;-webkit-text-stroke:0.15px #7a7a7a;">R:</div>
<div class="t" style="left:1033.2px;top:612.39px;font-size:5.8px;color:#7a7a7a;-webkit-text-stroke:0.15px #7a7a7a;">W:</div>
<div class="t" style="left:1034.0px;top:626.59px;font-size:5.8px;color:#7a7a7a;-webkit-text-stroke:0.15px #7a7a7a;">H:</div>
<div class="t" style="left:1034.0px;top:644.39px;font-size:5.8px;color:#7a7a7a;-webkit-text-stroke:0.15px #7a7a7a;">S:</div>
<div class="t" style="left:991.6px;top:612.39px;font-size:5.8px;color:#9a9a9a;-webkit-text-stroke:0.15px #9a9a9a;">0 px</div>
<div class="t" style="left:991.6px;top:626.59px;font-size:5.8px;color:#9a9a9a;-webkit-text-stroke:0.15px #9a9a9a;">0 px</div>
<div class="t" style="left:991.6px;top:644.39px;font-size:5.8px;color:#9a9a9a;-webkit-text-stroke:0.15px #9a9a9a;">0 °</div>
<div class="t" style="left:1045.9px;top:612.39px;font-size:5.8px;color:#9a9a9a;-webkit-text-stroke:0.15px #9a9a9a;">0 px</div>
<div class="t" style="left:1045.9px;top:626.59px;font-size:5.8px;color:#9a9a9a;-webkit-text-stroke:0.15px #9a9a9a;">0 px</div>
<div class="t" style="left:1045.9px;top:644.39px;font-size:5.8px;color:#9a9a9a;-webkit-text-stroke:0.15px #9a9a9a;">0 °</div>
<!-- image -->
<svg class="a" style="left:306px;top:105px" width="343" height="539">
<defs><linearGradient id="g" gradientUnits="userSpaceOnUse" x1="118" y1="420" x2="294" y2="51">
<stop offset="0" stop-color="#000"/><stop offset="1" stop-color="#fff"/></linearGradient></defs>
<rect width="343" height="539" fill="url(#g)"/>
</svg>
<svg class="a" style="left:0;top:0" width="1093" height="699">
<line x1="424" y1="525.7" x2="600.2" y2="156.3" stroke="#4a5a78" stroke-width="2.4" stroke-opacity="0.55"/><line x1="424" y1="525.7" x2="600.2" y2="156.3" stroke="#a8bce8" stroke-width="1.3"/>
<circle cx="424" cy="525.7" r="4.2" fill="#050510" stroke="#a9b9e6" stroke-width="1.6"/>
<circle cx="600.2" cy="156.3" r="2.6" fill="#e8f2f8" stroke="#6f7f90" stroke-width="1.2"/>
</svg>
</body></html>
